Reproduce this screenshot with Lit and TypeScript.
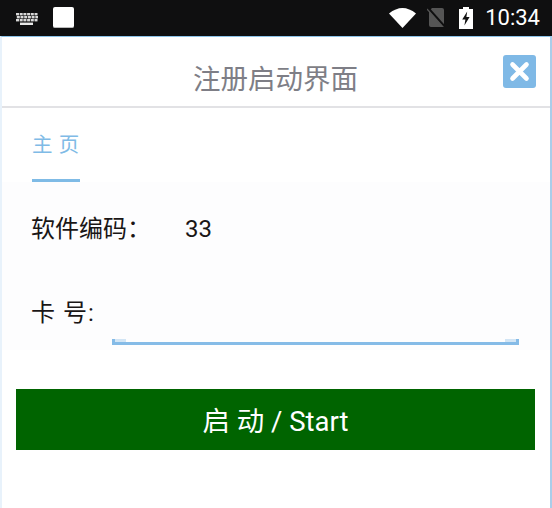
import { LitElement, html, css, svg } from "lit";
import { customElement } from "lit/decorators.js";

@customElement("app-root")
export class AppRoot extends LitElement {
  static styles = css`
    :host { display: block; width: 552px; height: 508px; overflow: hidden; background: #fff;
      font-family: Roboto, "Noto Sans CJK SC", sans-serif; color: #1a1616; }
    .status { height: 36px; background: #0f0f10; display: flex; align-items: center; padding: 0 12px 0 16px; color: #fff; }
    .kbd { display: block; width: 22px; height: 12px; margin-top: 1px; }
    .sq { width: 21px; height: 21px; margin-left: 15px; background: #fff; border-radius: 2px; border-bottom: 1px solid #bbb; box-sizing: border-box; margin-top: -1px; }
    .spacer { flex: 1; }
    .wifi { display: block; width: 27px; height: 20px; }
    .sim { display: block; width: 18px; height: 19px; margin-left: 11px; margin-top: -1px; }
    .bat { display: block; width: 14px; height: 22px; margin-left: 14px; }
    .clock { font-size: 22px; margin-left: 12px; line-height: 1; }
    .app { height: 472px; box-sizing: border-box; border-top: 1px solid #8cc3e8; border-left: 2px solid #e8f2fb; border-right: 2px solid #aacde9; display: flex; flex-direction: column; }
    .head { height: 69px; flex: none; border-bottom: 2px solid #e2e2e5; display: grid; grid-template-columns: 1fr auto 1fr; align-items: center; }
    .title { grid-column: 2; font-size: 27.5px; color: #7e7e86; line-height: 1; margin-top: 17px; margin-left: -1px; }
    .close { justify-self: end; width: 33px; height: 33px; margin-right: 14px; margin-top: -1px; background: #7fb9e6; border-radius: 3px; display: flex; align-items: center; justify-content: center; }
    .close svg { display: block; width: 23px; height: 23px; }
    .tabs { height: 74px; flex: none; box-sizing: border-box; padding-left: 30px; }
    .tab { display: inline-block; height: 74px; box-sizing: border-box; border-bottom: 3px solid #7fbbe6; font-size: 20.5px; color: #7fbbe6; padding-top: 22px; line-height: 30px; width: 48px; letter-spacing: 0.6px; white-space: nowrap; }
    .form { height: 168px; flex: none; background: #fdfdfe; box-sizing: border-box; padding: 28px 30px 0 29px; font-size: 24px; }
    .row { display: flex; align-items: center; height: 38px; }
    .label { width: 154px; margin-bottom: 5px; }
    .row2 { display: flex; margin-top: 46px; align-items: flex-start; }
    .label2 { width: 81px; line-height: 38px; white-space: nowrap; letter-spacing: 1px; }
    .input { width: 407px; height: 46px; margin-top: 5px; box-sizing: border-box; border-bottom: 3px solid #85bbe7; display: flex; justify-content: space-between; align-items: flex-end; }
    .cl, .cr { width: 14px; height: 3px; box-sizing: border-box; background: #d2e5f5; }
    .cl { border-left: 3px solid #85bbe7; }
    .cr { border-right: 3px solid #85bbe7; }
    .btnwrap { padding: 39px 15px 0 14px; }
    .btn { height: 61px; background: #006400; color: #fff; font-size: 27.5px; display: flex; align-items: center; justify-content: center; white-space: pre; padding-bottom: 1px; box-sizing: border-box; }
  `;

  render() {
    const keys = [];
    for (let r = 0; r < 3; r++) {
      for (let c = 0; c < 6; c++) {
        keys.push(svg`<rect x=${c * 3.7 + (r === 1 ? 0.8 : 0)} y=${r * 3} width="3" height="2.4" fill="#d8d8d8"></rect>`);
      }
    }
    return html`
      <div class="status">
        <svg class="kbd" viewBox="0 0 22 12">${keys}<rect x="4" y="9.6" width="13" height="2.4" fill="#e8e8e8"></rect></svg>
        <div class="sq"></div>
        <div class="spacer"></div>
        <svg class="wifi" viewBox="0 0 27 20"><path d="M0 5.5 Q13.5 -5.5 27 5.5 L13.5 20 Z" fill="#fff"></path></svg>
        <svg class="sim" viewBox="0 0 18 19"><path d="M5 0 H15 a2 2 0 0 1 2 2 V17 a2 2 0 0 1 -2 2 H4 a2 2 0 0 1 -2 -2 V3 Z" fill="#555"></path><path d="M1 0 L18 19" stroke="#0f0f10" stroke-width="2.5"></path><path d="M0 1 L17 20" stroke="#555" stroke-width="1.2"></path></svg>
        <svg class="bat" viewBox="0 0 14 22"><path d="M4 0 H10 V2 H14 V22 H0 V2 H4 Z" fill="#fff"></path><path d="M8.2 4.5 L3.2 12.5 H6.4 L5.4 18.5 L10.6 10 H7.4 Z" fill="#111"></path></svg>
        <div class="clock">10:34</div>
      </div>
      <div class="app">
        <div class="head">
          <div class="title">注册启动界面</div>
          <div class="close"><svg viewBox="0 0 23 23"><path d="M4.5 4.5 L18.5 18.5 M18.5 4.5 L4.5 18.5" stroke="#fff" stroke-width="4.6" stroke-linecap="round"></path></svg></div>
        </div>
        <div class="tabs"><div class="tab">主 页</div></div>
        <div class="form">
          <div class="row"><div class="label">软件编码：</div><div>33</div></div>
          <div class="row2"><div class="label2">卡 号:</div><div class="input"><div class="cl"></div><div class="cr"></div></div></div>
        </div>
        <div class="btnwrap"><div class="btn">启 动 / Start</div></div>
      </div>
    `;
  }
}
